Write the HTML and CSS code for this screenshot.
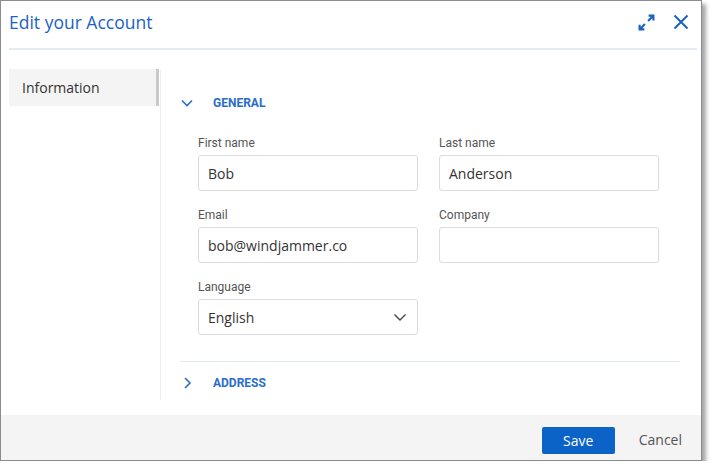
FILE: index.html
```html
<!doctype html>
<html>
<head>
    <meta charset="utf-8">
    <link rel="stylesheet" href="styles.css">
</head>
<body>
<div class="dialog">
    <div class="header">
        <div class="title">Edit your Account</div>
        <div class="tools">
            <svg class="icon" width="17" height="17" viewBox="0 0 16 16" fill="none" stroke="#1a62c4" stroke-width="2">
                <path d="M10 1.5h4.5v4.5M14.5 1.5L9.5 6.5M1.5 10v4.5h4.5M1.5 14.5l5-5"/>
            </svg>
            <svg class="icon" width="16" height="16" viewBox="0 0 16 16" fill="none" stroke="#1a62c4" stroke-width="2">
                <path d="M1.5 1.5l13 13M14.5 1.5l-13 13"/>
            </svg>
        </div>
    </div>

    <div class="body">
        <div class="sidebar">
            <div class="nav-item">Information</div>
        </div>
        <div class="content">
            <div class="section-head">
                <svg class="chev" width="12" height="12" viewBox="0 0 12 12" fill="none" stroke="#2a6dc9" stroke-width="1.6">
                    <path d="M1 3.5l5 5 5-5"/>
                </svg>
                <span>GENERAL</span>
            </div>
            <div class="fields">
                <div class="field">
                    <div class="label">First name</div>
                    <div class="input">Bob</div>
                </div>
                <div class="field">
                    <div class="label">Last name</div>
                    <div class="input">Anderson</div>
                </div>
                <div class="field">
                    <div class="label">Email</div>
                    <div class="input">bob@windjammer.co</div>
                </div>
                <div class="field">
                    <div class="label">Company</div>
                    <div class="input"></div>
                </div>
                <div class="field">
                    <div class="label">Language</div>
                    <div class="input select">
                        <span>English</span>
                        <svg width="14" height="14" viewBox="0 0 14 14" fill="none" stroke="#444" stroke-width="1.4">
                            <path d="M1.5 4.5l5.5 5.5 5.5-5.5"/>
                        </svg>
                    </div>
                </div>
            </div>
            <div class="sep"></div>
            <div class="section-head">
                <svg class="chev" width="12" height="12" viewBox="0 0 12 12" fill="none" stroke="#2a6dc9" stroke-width="1.6">
                    <path d="M4 1l5 5-5 5"/>
                </svg>
                <span>ADDRESS</span>
            </div>
        </div>
    </div>

    <div class="footer">
        <button class="save">Save</button>
        <span class="cancel">Cancel</span>
    </div>
</div>
</body>
</html>
```

FILE: styles.css
```css
body {
    margin: 0;
    background: #ffffff;
    font-family: "Open Sans", "Liberation Sans", sans-serif;
}

.dialog {
    width: 700px;
    height: 459px;
    border: 1px solid #8c8c8c;
    background: #ffffff;
    display: flex;
    flex-direction: column;
    box-shadow: 4px 4px 4px rgba(0, 0, 0, 0.35);
}

.header {
    flex-shrink: 0;
    margin: 0 4px 0 8px;
    height: 47px;
    border-bottom: 2px solid #e3ecf5;
    display: flex;
    align-items: center;
    justify-content: space-between;
}
.title {
    color: #1a62c4;
    font-size: 17.5px;
    margin-top: -6px;
}
.tools {
    display: flex;
    align-items: center;
    gap: 18px;
    margin-right: 8px;
    margin-top: -5px;
}

.body {
    flex: 1;
    display: flex;
    padding: 19px 0 0 8px;
}
.sidebar {
    width: 150px;
}
.nav-item {
    height: 37px;
    line-height: 37px;
    padding-left: 13px;
    background: #f4f4f4;
    border-right: 3px solid #c9c9c9;
    color: #333333;
    font-size: 14px;
}

.content {
    box-sizing: border-box;
    margin-left: 1px;
    border-left: 1px solid #efefef;
    height: 331px;
    width: 520px;
    padding: 22px 0 0 19px;
}
.section-head {
    height: 24px;
    display: flex;
    align-items: center;
    color: #2a6dc9;
    font: bold 12px Roboto, sans-serif;
}
.section-head .chev {
    width: 12px;
    margin: 0 20px 0 1px;
}
.fields {
    display: grid;
    grid-template-columns: 220px 220px;
    column-gap: 21px;
    row-gap: 16px;
    padding: 20px 0 0 18px;
}
.label {
    font: 12px Roboto, sans-serif;
    line-height: 16px;
    color: #555555;
    margin-bottom: 4px;
}
.input {
    height: 34px;
    border: 1px solid #dcdcdc;
    border-radius: 3px;
    padding: 0 9px;
    display: flex;
    align-items: center;
    font-size: 14px;
    color: #333333;
}
.select {
    justify-content: space-between;
    padding-right: 10px;
}
.sep {
    width: 500px;
    margin-top: 26px;
    border-top: 1px solid #dfe7ef;
    margin-bottom: 9px;
}

.footer {
    flex-shrink: 0;
    height: 45px;
    background: #f4f4f4;
    display: flex;
    align-items: flex-start;
    justify-content: flex-end;
    padding-right: 19px;
}
.save {
    margin-top: 12px;
    width: 73px;
    height: 27px;
    border: 0;
    border-radius: 2px;
    background: #0b63c8;
    color: #ffffff;
    font: 14px "Open Sans", sans-serif;
}
.cancel {
    margin: 15px 0 0 24px;
    color: #555555;
    font-size: 14px;
}
```
